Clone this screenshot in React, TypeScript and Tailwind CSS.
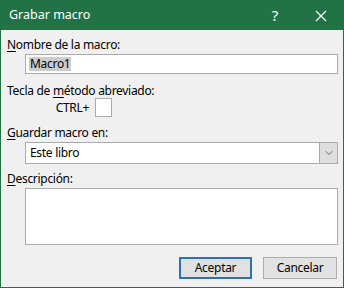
import { ChevronDown } from "lucide-react";

const font = { fontFamily: '"Noto Sans", "Segoe UI", sans-serif' };

function Mn({ children }: { children: string }) {
  // letra de acceso (subrayada)
  return <span className="underline underline-offset-2">{children}</span>;
}

export default function App() {
  return (
    <div
      className="flex h-[288px] w-[344px] flex-col border border-[#217346] bg-[#f0f0f0] text-[12px] tracking-[-0.3px] text-black"
      style={font}
    >
      {/* barra de título */}
      <div className="flex h-[29px] shrink-0 items-center bg-[#217346] pl-[8px] text-white">
        <span className="text-[12.5px] tracking-normal">Grabar macro</span>
        <span className="ml-auto mr-[37px] text-[15px]">?</span>
        <svg width="12" height="12" viewBox="0 0 12 12" className="mr-[16px]">
          <path d="M1 1 L11 11 M11 1 L1 11" stroke="white" strokeWidth="1.3" />
        </svg>
      </div>

      <div className="flex flex-1 flex-col pl-[6px] pr-[5px] pt-[7px]">
        <div className="h-[16px] leading-[16px]">
          <Mn>N</Mn>ombre de la macro:
        </div>
        <div className="ml-[18px] mt-[1px] flex h-[20px] items-center border border-[#ababab] bg-white pl-[3px]">
          <span className="bg-[#cccccc] px-px leading-[14px]">Macro1</span>
        </div>

        <div className="mt-[9px] h-[16px] leading-[16px]">
          Tecla de <Mn>m</Mn>étodo abreviado:
        </div>
        <div className="-mt-px flex h-[19px] items-center">
          <span className="w-[82px] text-right">CTRL+</span>
          <div className="ml-[6px] h-[19px] w-[17px] border border-[#ababab] bg-white" />
        </div>

        <div className="mt-[8px] h-[16px] leading-[16px]">
          <Mn>G</Mn>uardar macro en:
        </div>
        <div className="ml-[18px] mt-[1px] flex h-[22px] border border-[#ababab] bg-white">
          <span className="flex flex-1 items-center pl-[4px]">Este libro</span>
          <div className="flex w-[18px] items-center justify-center border-l border-[#ababab] bg-[#dedede]">
            <ChevronDown size={12} strokeWidth={1.5} className="text-[#444]" />
          </div>
        </div>

        <div className="mt-[7px] h-[16px] leading-[16px]">
          <Mn>D</Mn>escripción:
        </div>
        <div className="ml-[18px] mt-[1px] h-[57px] border border-[#ababab] bg-white" />

        <div className="mt-[12px] flex justify-end gap-[11px] pr-px">
          <button className="h-[22px] w-[73px] border-2 border-[#2a72b8] bg-[#e1e1e1]">
            Aceptar
          </button>
          <button className="h-[22px] w-[74px] border border-[#adadad] bg-[#e1e1e1]">
            Cancelar
          </button>
        </div>
      </div>
    </div>
  );
}
